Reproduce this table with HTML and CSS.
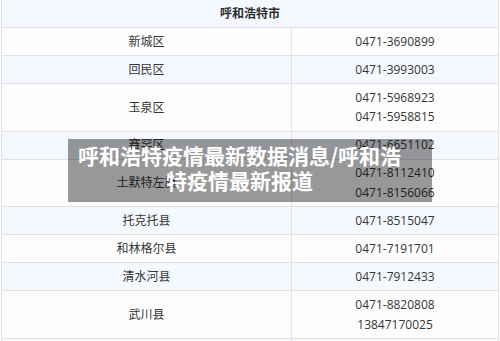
FILE: index.html
```html
<!DOCTYPE html>
<html lang="zh-CN">
<head>
<meta charset="utf-8">
<title>呼和浩特疫情最新数据消息</title>
<link rel="stylesheet" href="styles.css">
</head>
<body>
<div class="page">
  <table class="contacts">
    <colgroup>
      <col class="col-name">
      <col class="col-phone">
    </colgroup>
    <tr class="row-blue">
      <th colspan="2" class="city">呼和浩特市</th>
    </tr>
    <tr class="row-white"><td>新城区</td><td>0471-3690899</td></tr>
    <tr class="row-blue"><td>回民区</td><td>0471-3993003</td></tr>
    <tr class="row-white"><td>玉泉区</td><td>0471-5968923<br>0471-5958815</td></tr>
    <tr class="row-blue"><td>赛罕区</td><td>0471-6651102</td></tr>
    <tr class="row-white"><td>土默特左旗</td><td>0471-8112410<br>0471-8156066</td></tr>
    <tr class="row-blue"><td>托克托县</td><td>0471-8515047</td></tr>
    <tr class="row-white"><td>和林格尔县</td><td>0471-7191701</td></tr>
    <tr class="row-blue"><td>清水河县</td><td>0471-7912433</td></tr>
    <tr class="row-white"><td>武川县</td><td>0471-8820808<br>13847170025</td></tr>
    <tr class="row-blue"><td>&nbsp;</td><td>&nbsp;</td></tr>
  </table>
  <div class="caption">呼和浩特疫情最新数据消息/呼和浩特疫情最新报道</div>
</div>
</body>
</html>
```

FILE: styles.css
```css
html, body {
  margin: 0;
  padding: 0;
  overflow: hidden;
  background: #ffffff;
}

.page {
  position: relative;
  width: 500px;
  height: 341px;
  overflow: hidden;
}

.contacts {
  border-collapse: collapse;
  width: 497px;
  margin: -1px 0 0 1px;
  font-family: "Open Sans", "Noto Sans CJK SC", sans-serif;
  font-size: 12px;
  line-height: 19.5px;
  color: #363636;
  table-layout: fixed;
}

.col-name {
  width: 290px;
}

.col-phone {
  width: 207px;
}

.contacts th,
.contacts td {
  border: 1px solid #e2e2e2;
  padding: 3.78px 0;
  text-align: center;
  vertical-align: middle;
}

.contacts .city {
  font-weight: bold;
  color: #2e2e2e;
}

.row-blue {
  background: #f5f9ff;
}

.row-white {
  background: #fdfdfd;
}

.caption {
  position: absolute;
  left: 68px;
  top: 139px;
  width: 325px;
  padding: 4px 30px 9px 9px;
  background: rgba(0, 0, 0, 0.4);
  color: #ffffff;
  font-family: "Noto Sans CJK SC", sans-serif;
  font-weight: bold;
  font-size: 21px;
  line-height: 25px;
  text-align: center;
}
```
